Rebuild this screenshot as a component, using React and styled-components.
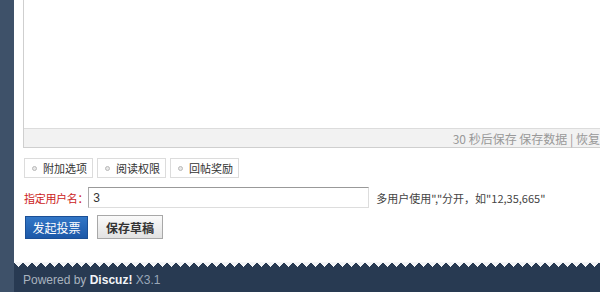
import React, { useState } from "react";
import styled, { createGlobalStyle } from "styled-components";

const GlobalStyle = createGlobalStyle`
  html, body {
    margin: 0;
    padding: 0;
    height: 100%;
    overflow: hidden;
  }
  body {
    font-family: "Noto Sans CJK SC", "Liberation Sans", sans-serif;
    font-size: 11px;
    color: #333;
  }
`;

const Page = styled.div`
  display: flex;
  width: 100%;
  height: 292px;
  overflow: hidden;
`;

const Side = styled.div`
  flex: 0 0 14px;
  background-color: #3e5169;
`;

const Main = styled.div`
  flex: 1;
  display: flex;
  flex-direction: column;
  background-color: #fff;
  min-width: 0;
`;

const Content = styled.div`
  flex: 1;
  padding-left: 9px;
`;

const Editor = styled.div`
  width: 605px;
  border: 1px solid #cfcfcf;
  border-top: none;
  box-shadow: inset 1px 0 0 #ececec;
`;

const EditArea = styled.div`
  height: 128px;
  background-color: #fff;
`;

const StatusBar = styled.div`
  height: 18px;
  border-top: 1px solid #dcdcdc;
  background-color: #f2f2f2;
  display: flex;
  align-items: center;
  justify-content: flex-end;
  padding-right: 5px;
  color: #999;
  font-size: 12px;
  white-space: nowrap;
`;

const Tabs = styled.div`
  display: flex;
  gap: 4px;
  margin-top: 10px;
  padding-left: 1px;
`;

const Tab = styled.button`
  display: flex;
  align-items: center;
  gap: 6px;
  height: 20px;
  width: 69px;
  padding: 0 0 0 7px;
  border: 1px solid #dcdcdc;
  background: #fff;
  font: inherit;
  color: #333;
  cursor: pointer;
`;

const Dot = styled.span`
  width: 3px;
  height: 3px;
  border-radius: 50%;
  border: 1px solid #b8b8b8;
  background: #e8e8e8;
`;

const FieldRow = styled.div`
  display: flex;
  align-items: center;
  margin-top: 9px;
  padding-left: 1px;
  height: 21px;
`;

const Label = styled.label`
  flex: 0 0 auto;
  color: #cc2222;
  white-space: nowrap;
  letter-spacing: -0.3px;
`;

const Input = styled.input.attrs({ type: "text" })`
  width: 271px;
  height: 15px;
  padding: 2px 4px;
  border: 1px solid;
  border-color: #999 #ddd #ddd #aaa;
  font-family: "Liberation Sans", sans-serif;
  font-size: 12px;
  color: #333;
  outline: none;
`;

const Hint = styled.span`
  margin-left: 7px;
  color: #444;
  white-space: nowrap;
`;

const Actions = styled.div`
  display: flex;
  align-items: center;
  gap: 9px;
  margin-top: 7px;
  padding-left: 2px;
`;

const SubmitBtn = styled.button`
  width: 63px;
  height: 23px;
  border: 1px solid #1b4f95;
  background: linear-gradient(#3277c7, #1c58a8);
  color: #fff;
  font: inherit;
  font-size: 12px;
  cursor: pointer;
`;

const DraftBtn = styled.button`
  width: 66px;
  height: 24px;
  border: 1px solid #a8a8a8;
  background: linear-gradient(#fafafa, #e2e2e2);
  color: #333;
  font: inherit;
  font-size: 12px;
  font-weight: bold;
  cursor: pointer;
`;

const Footer = styled.div`
  position: relative;
  height: 30px;
  box-sizing: border-box;
  background-color: #283a52;
  padding: 11px 0 0 9px;
  line-height: 14px;
  font-family: "Liberation Sans", sans-serif;
  font-size: 12px;
  color: #a9b3bf;
  white-space: nowrap;
  &::before {
    content: "";
    position: absolute;
    left: 0;
    right: 0;
    top: 0;
    height: 5px;
    background-image: conic-gradient(from -45deg at 50% 100%, #f4f5f7 90deg, transparent 0);
    background-size: 9px 5px;
    background-repeat: repeat-x;
  }
`;

const Brand = styled.strong`
  color: #f3f5f8;
`;

const Version = styled.span`
  color: #9aa7b8;
`;

function App() {
  const [user, setUser] = useState("3");
  const tabs = ["附加选项", "阅读权限", "回帖奖励"];

  return (
    <Page>
      <GlobalStyle />
      <Side />
      <Main>
        <Content>
          <Editor>
            <EditArea />
            <StatusBar>30 秒后保存 保存数据 | 恢复数据</StatusBar>
          </Editor>
          <Tabs>
            {tabs.map((t) => (
              <Tab key={t}>
                <Dot />
                {t}
              </Tab>
            ))}
          </Tabs>
          <FieldRow>
            <Label>指定用户名：</Label>
            <Input value={user} onChange={(e) => setUser(e.target.value)} />
            <Hint>多用户使用","分开，如"12,35,665"</Hint>
          </FieldRow>
          <Actions>
            <SubmitBtn>发起投票</SubmitBtn>
            <DraftBtn>保存草稿</DraftBtn>
          </Actions>
        </Content>
        <Footer>
          Powered by <Brand>Discuz!</Brand> <Version>X3.1</Version>
        </Footer>
      </Main>
    </Page>
  );
}

export default App;
